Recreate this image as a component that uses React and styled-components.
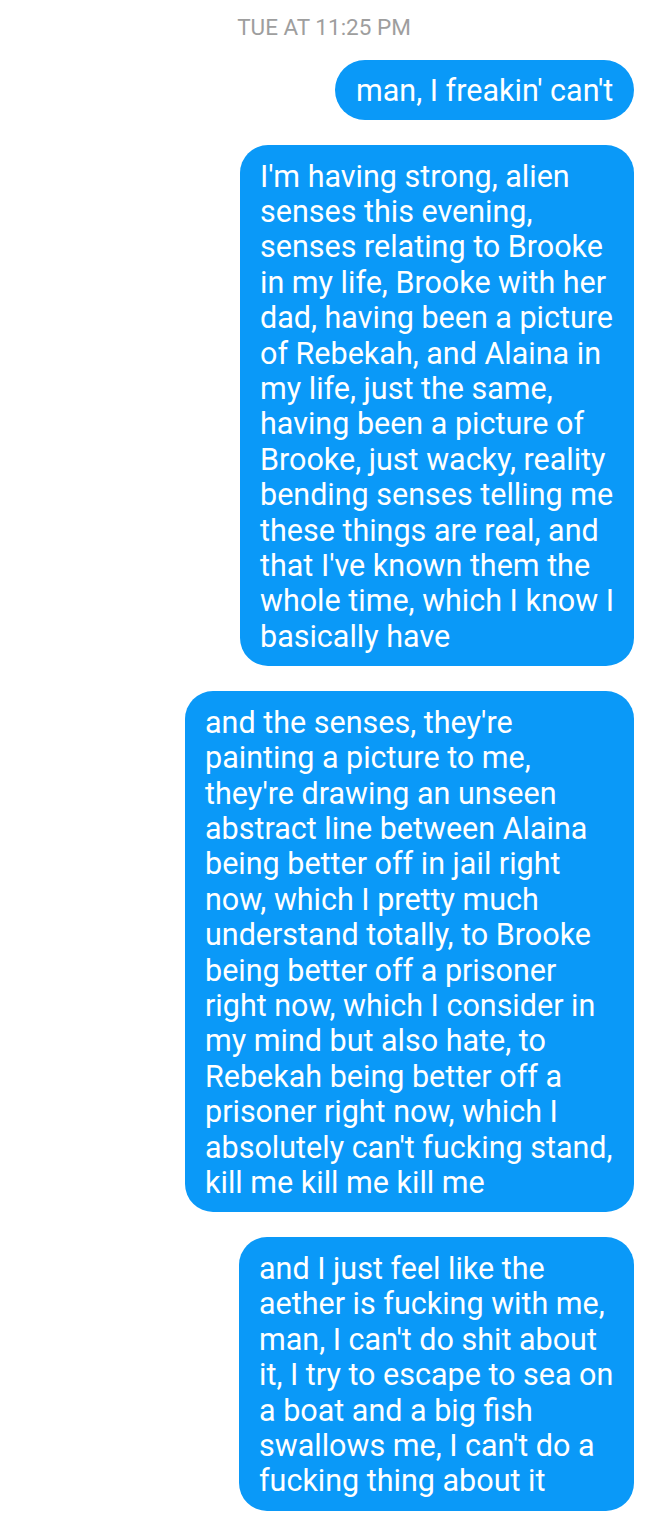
import styled, { createGlobalStyle } from "styled-components";

const GlobalStyle = createGlobalStyle`
  html, body {
    margin: 0;
    padding: 0;
    background: #ffffff;
  }
  body {
    font-family: Roboto, "Liberation Sans", sans-serif;
  }
`;

const Thread = styled.div`
  width: 648px;
  display: flex;
  flex-direction: column;
  align-items: flex-end;
  padding: 13px 14px 20px 0;
  box-sizing: border-box;
  gap: 25px;
`;

const Stamp = styled.div`
  align-self: center;
  margin-right: -14px;
  margin-bottom: -6px;
  font-size: 22.5px;
  line-height: 28px;
  color: #9e9e9e;
`;

const Bubble = styled.div`
  box-sizing: border-box;
  width: ${(props) => props.width}px;
  padding: ${(props) => (props.pill ? "13px 21px 11.6px" : "13.5px 20px 12px")};
  border-radius: ${(props) => (props.pill ? "30px" : "28px")};
  background: #0a99f8;
  color: #ffffff;
  font-size: 30.5px;
  line-height: 35.4px;
`;

const Line = styled.span`
  display: block;
  white-space: nowrap;
`;

const messages = [
  { width: 299, pill: true, lines: ["man, I freakin' can't"] },
  {
    width: 394,
    lines: [
      "I'm having strong, alien",
      "senses this evening,",
      "senses relating to Brooke",
      "in my life, Brooke with her",
      "dad, having been a picture",
      "of Rebekah, and Alaina in",
      "my life, just the same,",
      "having been a picture of",
      "Brooke, just wacky, reality",
      "bending senses telling me",
      "these things are real, and",
      "that I've known them the",
      "whole time, which I know I",
      "basically have",
    ],
  },
  {
    width: 449,
    lines: [
      "and the senses, they're",
      "painting a picture to me,",
      "they're drawing an unseen",
      "abstract line between Alaina",
      "being better off in jail right",
      "now, which I pretty much",
      "understand totally, to Brooke",
      "being better off a prisoner",
      "right now, which I consider in",
      "my mind but also hate, to",
      "Rebekah being better off a",
      "prisoner right now, which I",
      "absolutely can't fucking stand,",
      "kill me kill me kill me",
    ],
  },
  {
    width: 395,
    lines: [
      "and I just feel like the",
      "aether is fucking with me,",
      "man, I can't do shit about",
      "it, I try to escape to sea on",
      "a boat and a big fish",
      "swallows me, I can't do a",
      "fucking thing about it",
    ],
  },
];

const App = () => {
  return (
    <>
      <GlobalStyle />
      <Thread>
        <Stamp>TUE AT 11:25 PM</Stamp>
        {messages.map((m, i) => (
          <Bubble key={i} width={m.width} pill={m.pill}>
            {m.lines.map((l, j) => (
              <Line key={j}>{l}</Line>
            ))}
          </Bubble>
        ))}
      </Thread>
    </>
  );
};

export default App;
